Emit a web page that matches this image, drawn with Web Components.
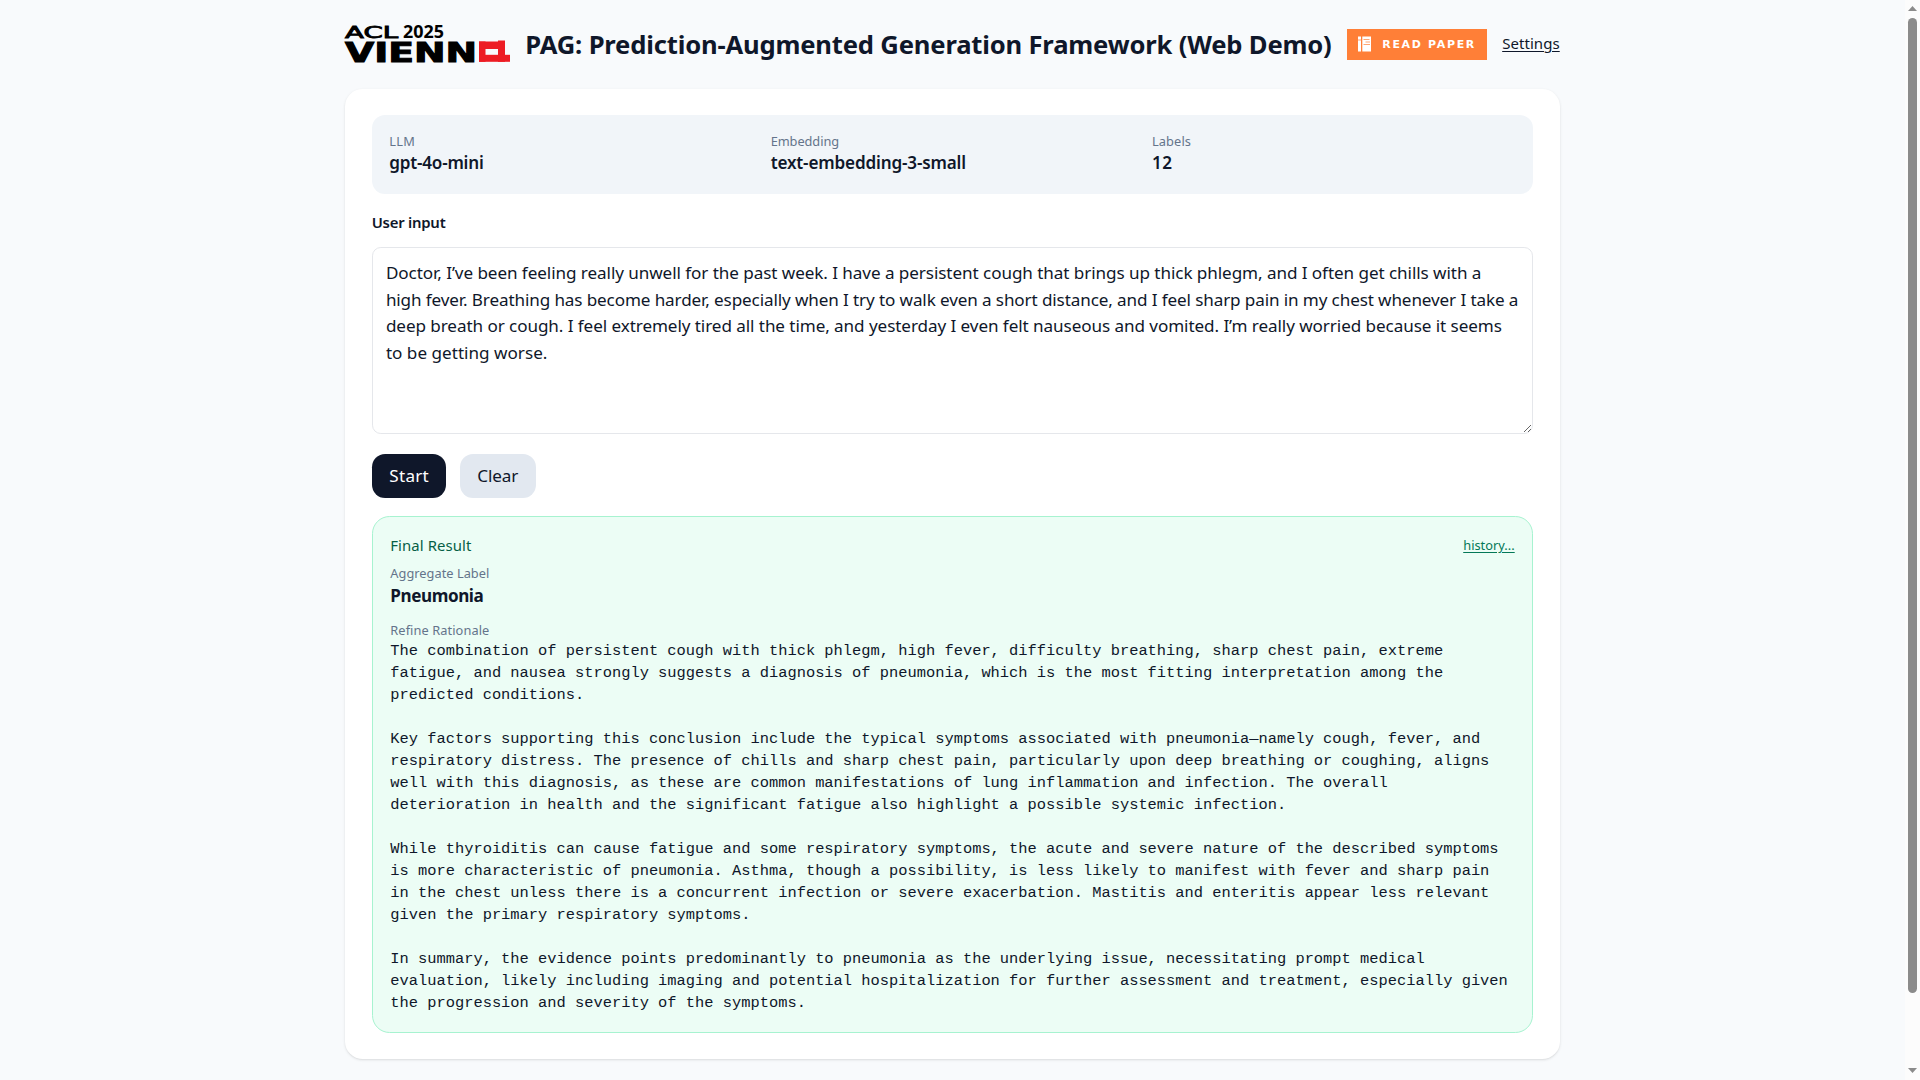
<!DOCTYPE html>
<html lang="en">
<head>
<meta charset="utf-8">
<title>PAG: Prediction-Augmented Generation Framework (Web Demo)</title>
<style>
html,body{margin:0;height:100%;overflow:hidden}
body{background:#f8fafc;color:#0f172a;font-family:"Noto Sans","Open Sans",sans-serif;font-size:17.1px;line-height:26.4px}
</style>
</head>
<body>
<demo-app></demo-app>
<script>
const define=(name,html,ready)=>{
  const t=document.createElement('template');t.innerHTML=html;
  customElements.define(name,class extends HTMLElement{
    constructor(){super();this.attachShadow({mode:'open'}).append(t.content.cloneNode(true));}
    connectedCallback(){if(ready)ready.call(this,this.shadowRoot);}
  });
};

/* One line of text whose tracking is set so that it spans the given width. */
define('fit-text',`<style>:host{display:block;white-space:nowrap}span{display:inline-block}:host([underlined]) span{text-decoration:underline;text-underline-offset:2px;text-decoration-thickness:1px}</style><span><slot></slot></span>`,function(r){
  const s=r.querySelector('span'),w=+this.getAttribute('w'),n=this.textContent.length;
  const k=(w-s.getBoundingClientRect().width)/(n-1);
  s.style.letterSpacing=k+'px';s.style.marginRight=-k+'px';
});

define('venue-logo',`<style>:host{display:block;width:165px;height:38px}svg{display:block;overflow:visible}</style>
<svg width="165" height="38" viewBox="0 0 165 38">
<g font-family="DejaVu Sans">
<text x="0" y="12.800" font-size="15.500" textLength="53" lengthAdjust="spacingAndGlyphs" stroke="#000" stroke-width=".8">ACL</text>
<text x="58" y="13" font-family="Noto Sans" font-weight="700" font-size="17" textLength="41" lengthAdjust="spacingAndGlyphs">2025</text>
<text x="0" y="36.500" font-weight="700" font-size="25.800" textLength="132" lengthAdjust="spacingAndGlyphs" stroke="#000" stroke-width="1">VIENN</text>
</g>
<g fill="#ed1c24"><rect x="134" y="16.500" width="26" height="7.500"/><rect x="153" y="15.500" width="7" height="2"/><rect x="134" y="16.500" width="6.500" height="20.300"/><rect x="153" y="16.500" width="7" height="20.300"/><rect x="134" y="29.800" width="31" height="7"/></g>
</svg>`);

define('paper-badge',`<style>:host{display:flex;align-items:center;width:140px;height:31px;background:#ff7f37;color:#fff;box-sizing:border-box;padding-left:11px;font:700 11px/31px "DejaVu Sans",sans-serif}
svg{display:block;margin-right:10px}</style>
<svg width="14" height="16" viewBox="0 0 14 16"><rect x="0" y=".5" width="3" height="15" fill="#fff"/><rect x="4.300" y=".5" width="8.700" height="15" fill="#fff"/><path d="M0 4h3M5.500 3.500h6M7.500 6h4.500M5.500 8.500h6.500" stroke="#ff7f37" stroke-width=".7"/></svg>
<fit-text w="92">READ PAPER</fit-text>`);

define('page-header',`<style>:host{display:flex;align-items:center;height:38.500px}
venue-logo{margin-right:15px}
h1{margin:0;font-size:25.6px;line-height:35.2px;font-weight:700;width:806.500px}
paper-badge{margin-left:15.500px}
a{margin-left:15px;font-size:15px;line-height:22px;margin-top:-3.200px}</style>
<venue-logo></venue-logo><h1><fit-text w="806.5">PAG: Prediction-Augmented Generation Framework (Web Demo)</fit-text></h1>
<paper-badge></paper-badge><a><fit-text underlined w="57.5">Settings</fit-text></a>`);

define('stat-item',`<style>:host{display:block;flex:1}
.l{font-size:12.8px;line-height:17.6px;color:#64748b}.v{font-weight:590;line-height:26.4px}</style>
<div class="l"><slot name="label"></slot></div><div class="v"><slot></slot></div>`);

define('stat-bar',`<style>:host{display:flex;gap:17.6px;padding:17.6px;border-radius:13.2px;background:#f1f5f9}</style>
<stat-item><fit-text slot="label" w="25.5">LLM</fit-text><fit-text w="94.5">gpt-4o-mini</fit-text></stat-item>
<stat-item><fit-text slot="label" w="68.5">Embedding</fit-text><fit-text w="195.5">text-embedding-3-small</fit-text></stat-item>
<stat-item><fit-text slot="label" w="39">Labels</fit-text><fit-text w="20">12</fit-text></stat-item>`);

define('input-area',`<style>:host{display:block;margin-top:16.6px}
.l{font-size:14.9px;line-height:22px;font-weight:590;margin-bottom:14.2px}
.box{box-sizing:border-box;height:186.8px;border:1px solid #e5e7eb;border-radius:8.8px;padding:12.3px 13.2px;overflow:hidden;resize:vertical;background:#fff}</style>
<div class="l"><fit-text w="74">User input</fit-text></div>
<div class="box">
<fit-text w="1095.5">Doctor, I’ve been feeling really unwell for the past week. I have a persistent cough that brings up thick phlegm, and I often get chills with a</fit-text>
<fit-text w="1132.5">high fever. Breathing has become harder, especially when I try to walk even a short distance, and I feel sharp pain in my chest whenever I take a</fit-text>
<fit-text w="1116">deep breath or cough. I feel extremely tired all the time, and yesterday I even felt nauseous and vomited. I’m really worried because it seems</fit-text>
<fit-text w="161.5">to be getting worse.</fit-text>
</div>`);

define('action-button',`<style>:host{display:block;box-sizing:border-box;padding:8.8px 17.6px;height:44px;border-radius:13.2px;background:#e2e8f0}
:host([primary]){background:#0f172a;color:#fff}</style><slot></slot>`);

define('result-panel',`<style>:host{display:block;border:1px solid #a7f3d0;border-radius:17.6px;background:#ecfdf5;padding:16.8px 17.6px 17.6px}
.top{display:flex;justify-content:space-between;align-items:center;height:22px;margin-bottom:9.6px;font-size:14.9px;line-height:22px;color:#065f46}
a{font-size:12.8px;line-height:17.6px;color:#047857;padding-top:2.4px}
.l{font-size:12.8px;line-height:17.6px;color:#64748b}
.v{font-weight:700;margin-bottom:12.4px}
pre{margin:.8px 0 0;font:15.4px/22px "Liberation Mono",monospace}</style>
<div class="top"><fit-text w="81">Final Result</fit-text><a><fit-text underlined w="51.5">history...</fit-text></a></div>
<div class="l"><fit-text w="99">Aggregate Label</fit-text></div>
<div class="v"><fit-text w="93.5">Pneumonia</fit-text></div>
<div class="l"><fit-text w="99">Refine Rationale</fit-text></div>
<pre>The combination of persistent cough with thick phlegm, high fever, difficulty breathing, sharp chest pain, extreme
fatigue, and nausea strongly suggests a diagnosis of pneumonia, which is the most fitting interpretation among the
predicted conditions.

Key factors supporting this conclusion include the typical symptoms associated with pneumonia—namely cough, fever, and
respiratory distress. The presence of chills and sharp chest pain, particularly upon deep breathing or coughing, aligns
well with this diagnosis, as these are common manifestations of lung inflammation and infection. The overall
deterioration in health and the significant fatigue also highlight a possible systemic infection.

While thyroiditis can cause fatigue and some respiratory symptoms, the acute and severe nature of the described symptoms
is more characteristic of pneumonia. Asthma, though a possibility, is less likely to manifest with fever and sharp pain
in the chest unless there is a concurrent infection or severe exacerbation. Mastitis and enteritis appear less relevant
given the primary respiratory symptoms.

In summary, the evidence points predominantly to pneumonia as the underlying issue, necessitating prompt medical
evaluation, likely including imaging and potential hospitalization for further assessment and treatment, especially given
the progression and severity of the symptoms.</pre>`);

define('main-card',`<style>:host{display:block;margin-top:25.3px;padding:26.4px;border-radius:17.6px;background:#fff;box-shadow:0 1px 3px rgba(0,0,0,.1),0 1px 2px -1px rgba(0,0,0,.1)}
.row{display:flex;gap:14px;margin:19.8px 0 18.300px}
action-button{width:76px}action-button[primary]{width:74px}</style>
<stat-bar></stat-bar><input-area></input-area>
<div class="row"><action-button primary><fit-text w="39.5">Start</fit-text></action-button><action-button><fit-text w="41">Clear</fit-text></action-button></div>
<result-panel></result-panel>`);

define('scroll-rail',`<style>:host{display:flex;flex-direction:column;align-items:center;justify-content:space-between;width:15px;height:1080px;background:#fcfcfc}
svg{display:block}</style>
<svg width="15" height="1080" fill="#8b8b8b"><path d="M3 11h9L7.500 6z"/><rect x="3" y="18" width="9" height="975" rx="4.500"/><path d="M3 1068h9l-4.500 5z"/></svg>`);

define('demo-app',`<style>:host{display:flex;height:1080px}
main{flex:1;display:flex;justify-content:center}
.col{width:1214.4px;padding-top:25px}</style>
<main><div class="col"><page-header></page-header><main-card></main-card></div></main><scroll-rail></scroll-rail>`);
</script>
</body>
</html>
